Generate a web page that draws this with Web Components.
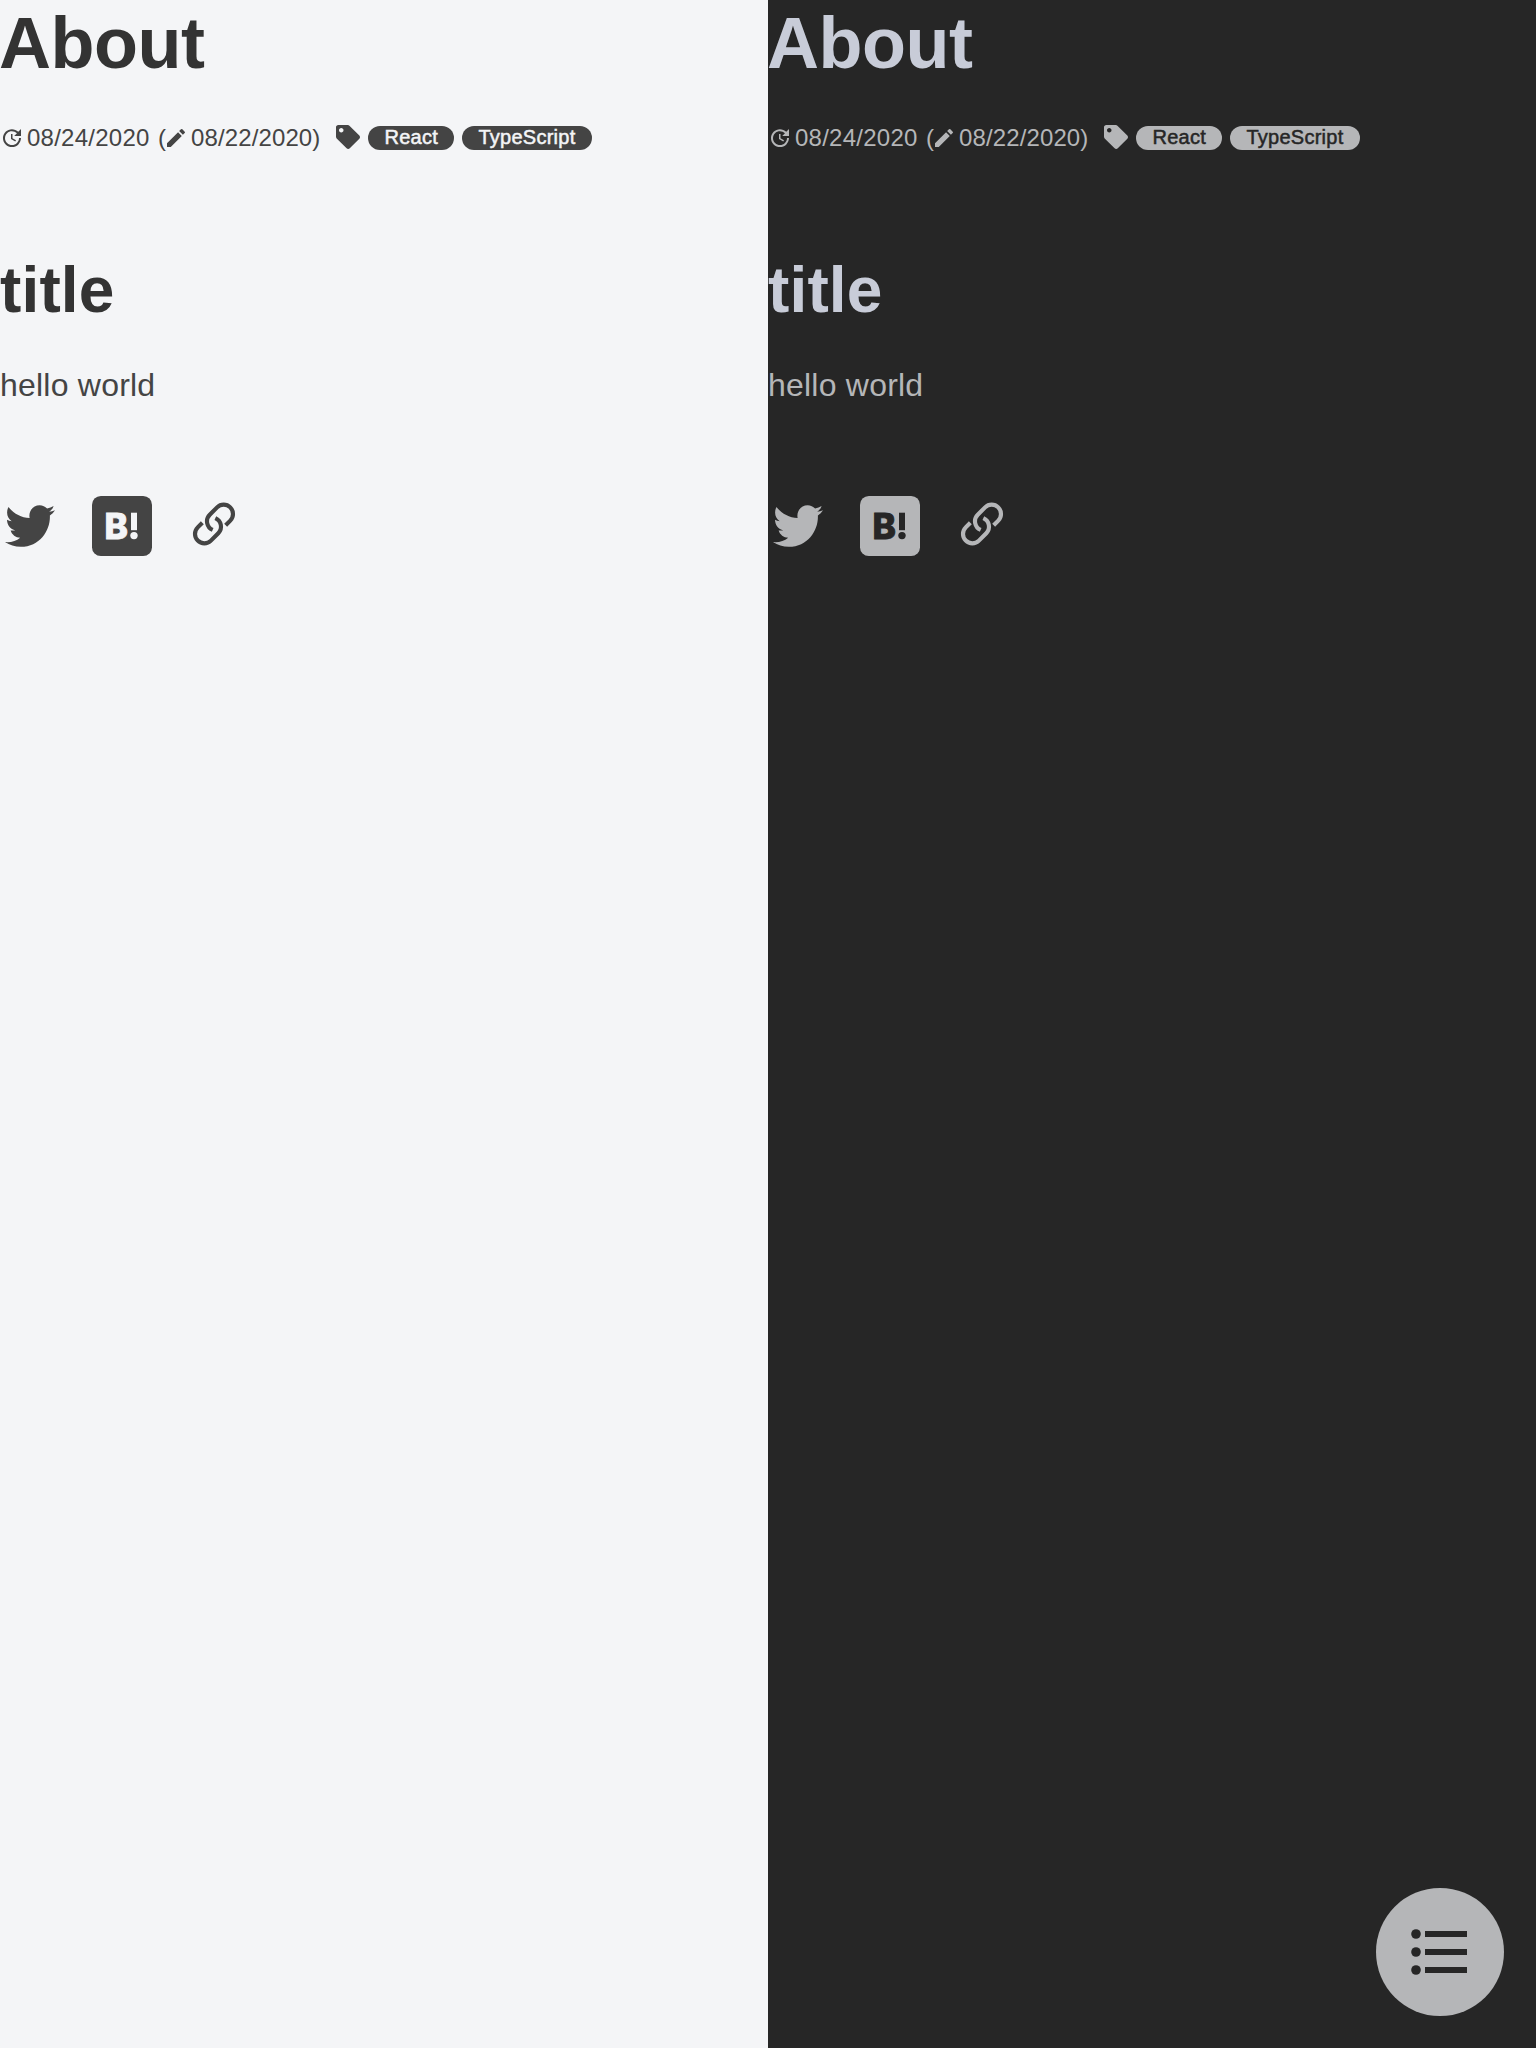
<!DOCTYPE html>
<html lang="en">
<head>
<meta charset="utf-8">
<title>About</title>
<style>
html,body{margin:0;height:100%}
body{font-family:"Liberation Sans",Arial,sans-serif;overflow:hidden}
</style>
</head>
<body>
<theme-compare>
  <article-page theme="light"></article-page>
  <article-page theme="dark"><toc-button></toc-button></article-page>
</theme-compare>
<script>
const define = (name, html) => customElements.define(name, class extends HTMLElement {
  constructor() {
    super();
    const t = document.createElement('template');
    t.innerHTML = html;
    this.attachShadow({mode: 'open'}).appendChild(t.content.cloneNode(true));
  }
});

define('theme-compare', `
<style>:host{display:flex;width:1536px;height:2048px}</style><slot></slot>`);

define('icon-update', `
<style>:host{display:block;width:24px;height:24px}svg{display:block}</style>
<svg width="24" height="24" viewBox="0 0 24 24" fill="currentColor"><path d="M21 10.12h-6.78l2.74-2.82c-2.73-2.7-7.15-2.8-9.88-.1-2.73 2.71-2.73 7.08 0 9.79s7.15 2.71 9.88 0C18.32 15.65 19 14.08 19 12.1h2c0 1.98-.88 4.55-2.64 6.29-3.51 3.48-9.21 3.48-12.72 0-3.5-3.47-3.53-9.11-.02-12.58s9.14-3.47 12.65 0L21 3v7.12zM12.5 8v4.25l3.5 2.08-.72 1.21L11 13V8h1.5z"/></svg>`);

define('icon-pencil', `
<style>:host{display:block;width:24px;height:24px}svg{display:block}</style>
<svg width="24" height="24" viewBox="0 0 24 24" fill="currentColor"><path d="M3 17.25V21h3.75L17.81 9.94l-3.75-3.75L3 17.25zM20.71 7.04a.996.996 0 000-1.41l-2.34-2.34a.996.996 0 00-1.41 0l-1.83 1.83 3.75 3.75 1.83-1.83z"/></svg>`);

define('icon-tag', `
<style>:host{display:block;width:24px;height:24px}svg{display:block}</style>
<svg width="24" height="24" viewBox="0 0 512 512" fill="currentColor"><path d="M0 252.118V48C0 21.49 21.49 0 48 0h204.118a48 48 0 0 1 33.941 14.059l211.882 211.882c18.745 18.745 18.745 49.137 0 67.882L293.823 497.941c-18.745 18.745-49.137 18.745-67.882 0L14.059 286.059A48 48 0 0 1 0 252.118zM112 64c-26.51 0-48 21.49-48 48s21.49 48 48 48 48-21.49 48-48-21.49-48-48-48z"/></svg>`);

define('tag-pill', `
<style>:host{display:flex;box-sizing:border-box;height:24px;border-radius:12px;background:var(--fg);color:var(--bg);align-items:center;padding-left:16.5px;font-size:20px;line-height:22px;white-space:nowrap;-webkit-text-stroke:.5px currentColor}span{margin-top:-3px}</style>
<span><slot></slot></span>`);

define('article-meta', `
<style>
:host{display:flex;align-items:flex-start;height:32px;font-size:24px;line-height:28px;white-space:nowrap;letter-spacing:.25px}
icon-update,icon-pencil,icon-tag{flex:none}
.updated{width:121px;margin-left:3px}
.open{width:8px;margin-left:10px;margin-right:-2px}
.created{width:129px;margin-left:3px;letter-spacing:.12px}
icon-tag{margin:0 8px 0 16px}
tag-pill{margin-top:1px}
.react{width:86px}
.ts{width:130px;margin-left:8px}
.t{margin-top:-1px}
icon-update,icon-pencil{margin-top:1px}
</style>
<icon-update></icon-update><span class="t updated">08/24/2020</span><span class="t open">(</span><icon-pencil></icon-pencil><span class="t created">08/22/2020)</span>
<icon-tag></icon-tag><tag-pill class="react">React</tag-pill><tag-pill class="ts">TypeScript</tag-pill>`);

define('share-links', `
<style>
:host{display:flex;align-items:center;height:60px}
svg{display:block;flex:none}
.hatena{margin-left:32px}
.link{margin-left:38px}
</style>
<svg width="60" height="60" viewBox="0 0 60 60"><path fill="currentColor" transform="translate(5 4.4) scale(.0977 .1)" d="M459.37 151.716c.325 4.548.325 9.097.325 13.645 0 138.72-105.583 298.558-298.558 298.558-59.452 0-114.68-17.219-161.137-47.106 8.447.974 16.568 1.299 25.34 1.299 49.055 0 94.213-16.568 130.274-44.832-46.132-.975-84.792-31.188-98.112-72.772 6.498.974 12.995 1.624 19.818 1.624 9.421 0 18.843-1.3 27.614-3.573-48.081-9.747-84.143-51.98-84.143-102.985v-1.299c13.969 7.797 30.214 12.67 47.431 13.319-28.264-18.843-46.781-51.005-46.781-87.391 0-19.492 5.197-37.36 14.294-52.954 51.655 63.675 129.3 105.258 216.365 109.807-1.624-7.797-2.599-15.918-2.599-24.04 0-57.828 46.782-104.934 104.934-104.934 30.213 0 57.502 12.67 76.67 33.137 23.715-4.548 46.456-13.32 66.599-25.34-7.798 24.366-24.366 44.833-46.132 57.827 21.117-2.273 41.584-8.122 60.426-16.243-14.292 20.791-32.161 39.308-52.628 54.253z"/></svg>
<svg class="hatena" width="60" height="60" viewBox="0 0 60 60"><rect width="60" height="60" rx="8.8" fill="currentColor"/><g fill="var(--bg)"><text x="12.6" y="42.7" font-family="Inter" font-weight="800" font-size="35.2" stroke="var(--bg)" stroke-width=".9">B</text><path d="M39 16.7h6v17.5h-6z"/><circle cx="42" cy="39.6" r="3.7"/></g></svg>
<svg class="link" width="48" height="60" viewBox="0 0 48 60"><g transform="translate(-4 0) scale(.33333)" fill="none" stroke="currentColor" stroke-width="12.5"><path d="M119 87.6 132.8 73.8A28 28 0 0 0 93.2 34.2L71.2 56.2A28 28 0 0 0 80 101.7"/><path d="M49 80.4 35.2 94.2A28 28 0 0 0 74.8 133.8L96.8 111.8A28 28 0 0 0 88 66.3"/></g></svg>`);

define('toc-button', `
<style>:host{display:block;position:absolute;right:32px;bottom:32px;width:128px;height:128px;border-radius:50%;background:var(--fg)}svg{display:block}</style>
<svg width="128" height="128" viewBox="0 0 128 128" fill="var(--bg)"><circle cx="40" cy="46" r="4.8"/><circle cx="40" cy="64" r="4.8"/><circle cx="40" cy="82" r="4.8"/><path d="M49 43h42v6H49zM49 61h42v6H49zM49 79h42v6H49z"/></svg>`);

define('article-page', `
<style>
:host{display:flex;flex-direction:column;position:relative;box-sizing:border-box;width:768px;height:2048px;background:var(--bg);color:var(--fg);--bg:#f4f5f7;--fg:#444;--head:#333}
:host([theme=dark]){--bg:#262626;--fg:#b5b6b8;--head:#c8ccd8}
h1,h2,p{margin:0;color:var(--head);white-space:nowrap}
h1{font-size:72px;line-height:84px;height:84px;padding-top:1px;letter-spacing:-.5px;text-indent:-1px}
article-meta{margin-top:40px}
h2{font-size:64px;line-height:74px;margin-top:96px;letter-spacing:.15px}
p{font-size:32px;line-height:40px;color:var(--fg);margin-top:38px;letter-spacing:.22px}
share-links{margin-top:91px}
</style>
<h1>About</h1><article-meta></article-meta><h2>title</h2><p>hello world</p><share-links></share-links><slot></slot>`);
</script>
</body>
</html>
